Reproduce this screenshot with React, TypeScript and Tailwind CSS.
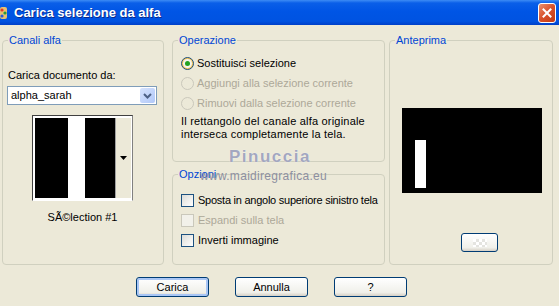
import React from "react";

const font = "font-['Liberation_Sans',Arial,sans-serif]";

const GroupBox = ({
  label,
  className,
  children,
}: {
  label: string;
  className?: string;
  children: React.ReactNode;
}) => (
  <fieldset className={`min-w-0 border border-[#D0D0BF] rounded-[4px] ${className ?? ""}`}>
    <legend className="ml-[5px] px-[1px] text-[#0046D5] leading-[13px]">{label}</legend>
    {children}
  </fieldset>
);

const Radio = ({ checked, disabled, label }: { checked?: boolean; disabled?: boolean; label: string }) => (
  <div className="flex items-center h-[20px] ml-[8px]">
    {disabled ? (
      <span className="shrink-0 w-[13px] h-[13px] rounded-full border border-[#CAC8BB] bg-[#ECE9D8]" />
    ) : (
      <span className="shrink-0 w-[13px] h-[13px] rounded-full border border-[#1C5180] bg-[#F7C65A] flex items-center justify-center">
        <span className="w-[9px] h-[9px] rounded-full bg-[#F4F4EE] flex items-center justify-center">
          {checked && <span className="w-[5px] h-[5px] rounded-full bg-[#21A121]" />}
        </span>
      </span>
    )}
    <span className={`ml-[3px] whitespace-nowrap leading-[13px] ${disabled ? "text-[#ACA899]" : "text-black"}`}>
      {label}
    </span>
  </div>
);

const Check = ({ disabled, label, tight }: { disabled?: boolean; label: string; tight?: boolean }) => (
  <div className="flex items-center h-[20px] ml-[8px]">
    <span
      className={`shrink-0 w-[13px] h-[13px] border ${
        disabled
          ? "border-[#CAC8BB] bg-[#F2F1EA]"
          : "border-[#1C5180] bg-[linear-gradient(135deg,#DCDCD7,#FFFFFF)]"
      }`}
    />
    <span
      className={`ml-[4px] whitespace-nowrap leading-[13px] ${tight ? "tracking-[-0.25px]" : ""} ${
        disabled ? "text-[#ACA899]" : "text-black"
      }`}
    >
      {label}
    </span>
  </div>
);

const XpButton = ({ label, isDefault }: { label: string; isDefault?: boolean }) => (
  <button
    className={`w-[73px] h-[20px] rounded-[3px] border border-[#003C74] bg-[linear-gradient(to_bottom,#FFFFFF,#F0F0EA_80%,#D6D0C5)] text-black leading-[13px] ${
      isDefault ? "shadow-[inset_0_0_0_2px_#A9C6F5]" : ""
    }`}
  >
    {label}
  </button>
);

export default function App() {
  return (
    <div className={`relative w-[559px] h-[306px] bg-[#ECE9D8] overflow-hidden text-[11px] ${font}`}>
      {/* title bar */}
      <div className="h-[25px] flex items-center bg-[linear-gradient(to_bottom,#3D8CF5_0%,#0A5FE8_12%,#0055E5_45%,#0053E1_85%,#0040C8_100%)]">
        <svg width="8" height="14" viewBox="0 0 8 14">
          <rect x="0" y="1" width="7" height="12" rx="2" fill="#E8C070" />
          <circle cx="2" cy="4" r="1.6" fill="#E23A2A" />
          <circle cx="5" cy="7" r="1.6" fill="#2A9A3A" />
          <circle cx="2" cy="10" r="1.6" fill="#2A5AD8" />
        </svg>
        <span className="ml-[6px] text-white font-bold text-[13px] [text-shadow:1px_1px_0_#0A2A8A]">
          Carica selezione da alfa
        </span>
        <div className="ml-auto mr-[3px] w-[18px] h-[20px] rounded-[3px] border border-white bg-[linear-gradient(135deg,#E9906F,#D8502A_50%,#C23A14)] flex items-center justify-center">
          <svg width="10" height="10" viewBox="0 0 10 10">
            <path d="M1.5 1.5 L8.5 8.5 M8.5 1.5 L1.5 8.5" stroke="white" strokeWidth="2" strokeLinecap="square" />
          </svg>
        </div>
      </div>

      {/* groups */}
      <div className="flex pt-[9px]">
        <GroupBox label="Canali alfa" className="ml-[2px] w-[162px] h-[231px]">
          <div className="mt-[22px] ml-[5px] leading-[13px]">Carica documento da:</div>
          <div className="mt-[4px] ml-[4px] w-[150px] h-[19px] border border-[#7F9DB9] bg-white flex items-center">
            <span className="ml-[3px] leading-[13px]">alpha_sarah</span>
            <span className="ml-auto mr-[1px] w-[15px] h-[15px] rounded-[2px] bg-[linear-gradient(135deg,#D6E3FD,#B1C8F8)] flex items-center justify-center">
              <svg width="9" height="6" viewBox="0 0 9 6">
                <path d="M1 1 L4.5 4.5 L8 1" stroke="#4D6185" strokeWidth="2" fill="none" />
              </svg>
            </span>
          </div>
          <div className="mt-[10px] ml-[29px] w-[101px] h-[86px] border border-[#404040] border-r-[#808080] border-b-[#FFFFFF] flex bg-white">
            <div className="flex-1 m-[2px] mr-0 bg-black flex">
              <div className="ml-[33px] w-[17px] bg-white" />
            </div>
            <div className="w-[16px] my-[2px] mr-[1px] bg-[#ECE9D8] border-l border-[#A0A0A0] flex items-center justify-center">
              <svg width="7" height="4" viewBox="0 0 7 4">
                <path d="M0 0 H7 L3.5 4 Z" fill="black" />
              </svg>
            </div>
          </div>
          <div className="mt-[10px] ml-[29px] w-[101px] text-center leading-[13px]">SÃ©lection #1</div>
        </GroupBox>

        <div className="ml-[8px] w-[213px] flex flex-col gap-[6px]">
          <GroupBox label="Operazione" className="h-[128px]">
            <div className="mt-[6px]">
              <Radio checked label="Sostituisci selezione" />
              <Radio disabled label="Aggiungi alla selezione corrente" />
              <Radio disabled label="Rimuovi dalla selezione corrente" />
            </div>
            <p className="mt-[2px] ml-[8px] leading-[13px] tracking-[0.2px]">
              Il rettangolo del canale alfa originale
              <br />
              interseca completamente la tela.
            </p>
          </GroupBox>
          <GroupBox label="Opzioni" className="h-[97px]">
            <div className="mt-[9px]">
              <Check tight label="Sposta in angolo superiore sinistro tela" />
              <Check disabled label="Espandi sulla tela" />
              <Check label="Inverti immagine" />
            </div>
          </GroupBox>
        </div>

        <GroupBox label="Anteprima" className="ml-[4px] w-[164px] h-[231px]">
          <div className="mt-[61px] ml-[12px] w-[140px] h-[85px] bg-black pt-[32px] pl-[13px]">
            <div className="w-[11px] h-[48px] bg-white" />
          </div>
          <div className="mt-[40px] ml-[71px] w-[37px] h-[19px] rounded-[3px] border border-[#003C74] bg-[linear-gradient(to_bottom,#FFFFFF,#F0F0EA_80%,#D6D0C5)] flex items-center justify-center">
            <div className="w-[14px] h-[8px] bg-[repeating-conic-gradient(#E4E4E0_0%_25%,#FFFFFF_0%_50%)] bg-[length:6px_6px]" />
          </div>
        </GroupBox>
      </div>

      {/* bottom buttons */}
      <div className="flex gap-[26px] ml-[136px] mt-[12px]">
        <XpButton label="Carica" isDefault />
        <XpButton label="Annulla" />
        <XpButton label="?" />
      </div>

      {/* watermark */}
      <div className="absolute left-[229px] top-[148px] text-[17px] font-bold tracking-[1.5px] text-[#A3A7BF] [text-shadow:0_0_1px_#FFFFFF] leading-[18px]">
        Pinuccia
      </div>
      <div className="absolute left-[200px] top-[170px] text-[12px] tracking-[0.3px] text-[#8D8FA0] leading-[13px]">
        www.maidiregrafica.eu
      </div>
    </div>
  );
}
